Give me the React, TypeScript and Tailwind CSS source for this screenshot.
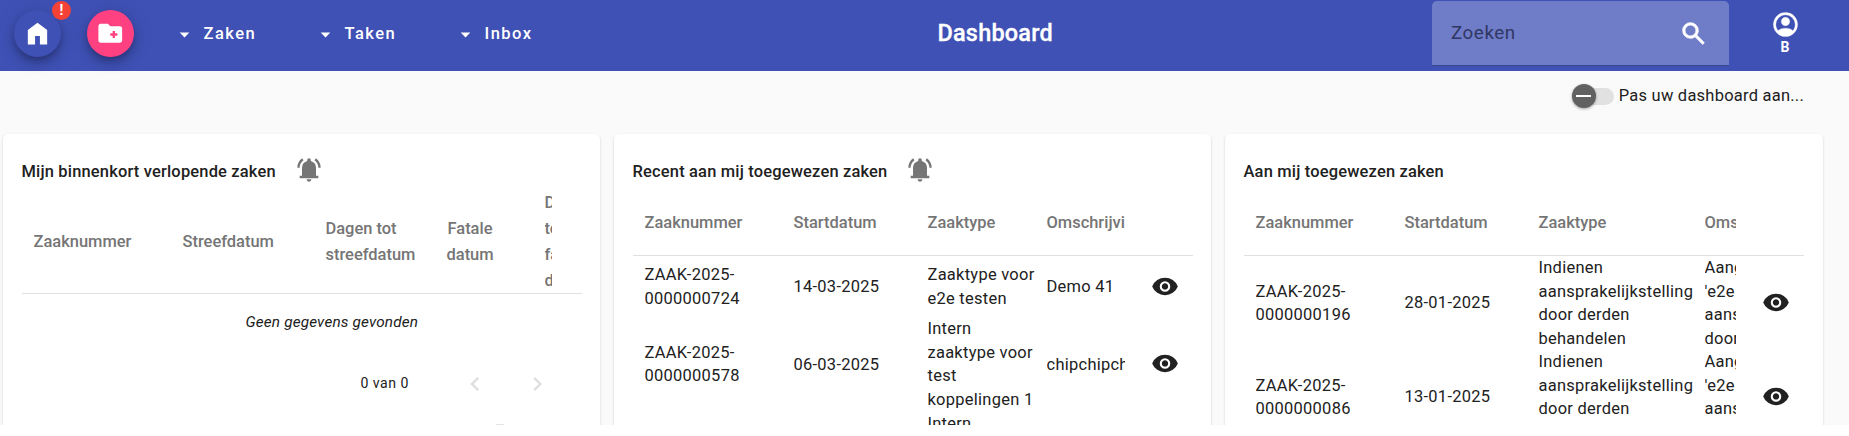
import type { ReactNode } from 'react';

const paths = {
  home: 'M160-120v-480l320-240 320 240v480H560v-280H400v280Z',
  folder:
    'M560-320h80v-80h80v-80h-80v-80h-80v80h-80v80h80v80ZM160-160q-33 0-56.5-23.5T80-240v-480q0-33 23.5-56.5T160-800h240l80 80h320q33 0 56.5 23.5T880-640v400q0 33-23.5 56.5T800-160H160Z',
  caret: 'M480-360 280-560h400L480-360Z',
  search:
    'M784-120 532-372q-30 24-69 38t-83 14q-109 0-184.5-75.5T120-580q0-109 75.5-184.5T380-840q109 0 184.5 75.5T640-580q0 44-14 83t-38 69l252 252-56 56ZM380-400q75 0 127.5-52.5T560-580q0-75-52.5-127.5T380-760q-75 0-127.5 52.5T200-580q0 75 52.5 127.5T380-400Z',
  account:
    'M234-276q51-39 114-61.5T480-360q69 0 132 22.5T726-276q35-41 54.5-93T800-480q0-133-93.5-226.5T480-800q-133 0-226.5 93.5T160-480q0 59 19.5 111t54.5 93Zm246-164q-59 0-99.5-40.5T340-580q0-59 40.5-99.5T480-720q59 0 99.5 40.5T620-580q0 59-40.5 99.5T480-440Zm0 360q-83 0-156-31.5T197-197q-54-54-85.5-127T80-480q0-83 31.5-156T197-763q54-54 127-85.5T480-880q83 0 156 31.5T763-763q54 54 85.5 127T880-480q0 83-31.5 156T763-197q-54 54-127 85.5T480-80Z',
  bell: 'M80-560q0-100 44.5-183.5T244-882l47 64q-60 44-95.5 111T160-560H80Zm720 0q0-80-35.5-147T669-818l47-64q75 55 119.5 138.5T880-560h-80ZM160-200v-80h80v-280q0-83 50-147.5T420-792v-28q0-25 17.5-42.5T480-880q25 0 42.5 17.5T540-820v28q80 20 130 84.5T720-560v280h80v80H160ZM480-80q-33 0-56.5-23.5T400-160h160q0 33-23.5 56.5T480-80Z',
  eye: 'M480-320q75 0 127.5-52.5T660-500q0-75-52.5-127.5T480-680q-75 0-127.5 52.5T300-500q0 75 52.5 127.5T480-320Zm0-72q-45 0-76.5-31.5T372-500q0-45 31.5-76.5T480-608q45 0 76.5 31.5T588-500q0 45-31.5 76.5T480-392Zm0 192q-146 0-266-81.5T40-500q54-137 174-218.5T480-800q146 0 266 81.5T920-500q-54 137-174 218.5T480-200Z',
  prev: 'M560-240 320-480l240-240 56 56-184 184 184 184-56 56Z',
  next: 'M504-480 320-664l56-56 240 240-240 240-56-56 184-184Z',
};

function Icon({ name, className }: { name: keyof typeof paths; className: string }) {
  return (
    <svg viewBox="0 -960 960 960" fill="currentColor" className={`shrink-0 ${className}`}>
      <path d={paths[name]} />
    </svg>
  );
}

function MenuItem({ label, className }: { label: string; className: string }) {
  return (
    <div className={`flex shrink-0 items-center ${className}`}>
      <Icon name="caret" className="mr-[8px] size-[23px]" />
      <span className="text-[16.5px] font-medium tracking-[1.47px]">{label}</span>
    </div>
  );
}

function Card({ title, bell, className, children }: { title: string; bell?: boolean; className: string; children: ReactNode }) {
  return (
    <section
      className={`h-[400px] shrink-0 rounded-[5px] bg-white pl-[18.5px] shadow-[0_2px_1px_-1px_rgba(0,0,0,0.2),0_1px_1px_0_rgba(0,0,0,0.14),0_1px_3px_0_rgba(0,0,0,0.12)] ${className}`}
    >
      <div className="flex h-[56px] items-center pt-[20px]">
        <h2 className="text-[16.47px] font-medium tracking-[0.18px]">{title}</h2>
        {bell && <Icon name="bell" className="mb-[5px] ml-[19px] size-[28px] text-[#757575]" />}
      </div>
      {children}
    </section>
  );
}

type Row = { id: string[]; date: string; type: string[]; text: string[]; height: string };

function CaseTable({ typeWidth, textWidth, header, rows }: { typeWidth: string; textWidth: string; header: string; rows: Row[] }) {
  return (
    <div className="w-[560px] text-[16.47px] whitespace-nowrap">
      <div className="flex h-[66px] border-b border-[#e0e0e0] pl-[12px] pt-[20px] leading-[26px] font-medium text-[#757575]">
        <div className="w-[149px]">Zaaknummer</div>
        <div className="w-[134px]">Startdatum</div>
        <div className={typeWidth}>Zaaktype</div>
        <div className={`overflow-hidden ${textWidth}`}>{header}</div>
      </div>
      {rows.map((row) => (
        <div key={row.id[1]} className={`flex items-center pl-[12px] leading-[23.5px] tracking-[0.27px] ${row.height}`}>
          <div className="w-[149px] shrink-0">
            {row.id.map((l) => (
              <div key={l}>{l}</div>
            ))}
          </div>
          <div className="w-[134px] shrink-0">{row.date}</div>
          <div className={`shrink-0 ${typeWidth}`}>
            {row.type.map((l) => (
              <div key={l}>{l}</div>
            ))}
          </div>
          <div className={`shrink-0 overflow-hidden ${textWidth}`}>
            {row.text.map((l) => (
              <div key={l}>{l}</div>
            ))}
          </div>
          <Icon name="eye" className="ml-[26px] size-[28px]" />
        </div>
      ))}
    </div>
  );
}

const recent: Row[] = [
  { id: ['ZAAK-2025-', '0000000724'], date: '14-03-2025', type: ['Zaaktype voor', 'e2e testen'], text: ['Demo 41'], height: 'h-[61px]' },
  { id: ['ZAAK-2025-', '0000000578'], date: '06-03-2025', type: ['Intern', 'zaaktype voor', 'test', 'koppelingen 1'], text: ['chipchipchip'], height: 'h-[94.5px]' },
];

const claim = ['Indienen', 'aansprakelijkstelling', 'door derden', 'behandelen'];
const claimText = ['Aangemaakt', "'e2e test", 'aansprakelijk', 'door derden'];
const assigned: Row[] = [
  { id: ['ZAAK-2025-', '0000000196'], date: '28-01-2025', type: claim, text: claimText, height: 'h-[94px]' },
  { id: ['ZAAK-2025-', '0000000086'], date: '13-01-2025', type: claim, text: claimText, height: 'h-[94px]' },
];

export default function App() {
  return (
    <div className="h-[436px] w-[1849px] overflow-hidden bg-white font-[Roboto,sans-serif] text-[#212121]">
      <div className="h-[425px] overflow-hidden bg-[#fafafa]">
        <header className="flex h-[71px] items-start bg-[#3f51b5] text-white">
          <div className="relative mt-[10px] ml-[14px] flex size-[47px] shrink-0 items-center justify-center rounded-full bg-[#3f51b5] shadow-[0_4px_6px_-1px_rgba(0,0,0,0.2),0_7px_12px_0_rgba(0,0,0,0.14),0_1px_21px_0_rgba(0,0,0,0.12)]">
            <Icon name="home" className="size-[29px]" />
            <span className="absolute -top-[9px] left-[38px] flex size-[19px] items-center justify-center rounded-full bg-[#f44336] text-[14px] font-bold">
              !
            </span>
          </div>
          <div className="mt-[10px] ml-[26px] flex size-[47px] shrink-0 items-center justify-center rounded-full bg-[#ff4081] shadow-[0_4px_6px_-1px_rgba(0,0,0,0.2),0_7px_12px_0_rgba(0,0,0,0.14),0_1px_21px_0_rgba(0,0,0,0.12)]">
            <Icon name="folder" className="size-[28.5px]" />
          </div>
          <nav className="ml-[38.5px] flex h-[68px] w-[765px] shrink-0">
            <MenuItem label="Zaken" className="w-[141px]" />
            <MenuItem label="Taken" className="w-[140px]" />
            <MenuItem label="Inbox" className="w-[140px]" />
          </nav>
          <h1 className="flex h-[68px] w-[494.5px] shrink-0 items-center text-[23.5px] font-medium tracking-[0.18px] [-webkit-text-stroke:0.3px]">
            Dashboard
          </h1>
          <div className="mt-px flex h-[65px] w-[297px] shrink-0 items-center rounded-t-[5px] border-b border-[#384590] bg-[#6f7cc7] pt-px pl-[19px]">
            <span className="w-[228px] text-[18.8px] tracking-[0.55px] text-[#2f3764]">Zoeken</span>
            <Icon name="search" className="size-[29px] stroke-white [stroke-width:24]" />
          </div>
          <div className="ml-[42px] flex w-[28px] flex-col items-center pt-[9.5px]">
            <Icon name="account" className="size-[29px] stroke-white [stroke-width:10]" />
            <span className="text-[14px] leading-[16px] font-bold">B</span>
          </div>
        </header>

        <div className="flex h-[63px] justify-end pt-[12px] pr-[45px]">
          <div className="flex h-[26px] items-center">
            <div className="mr-[5px] flex h-[17px] w-[42px] items-center rounded-full bg-[#e1e1e1]">
              <div className="flex size-[24px] items-center justify-center rounded-full bg-[#616161] shadow-[0_1px_3px_rgba(0,0,0,0.35)]">
                <div className="h-[2px] w-[15px] bg-white" />
              </div>
            </div>
            <span className="text-[16.47px] tracking-[0.25px]">Pas uw dashboard aan...</span>
          </div>
        </div>

        <main className="flex pl-[3px]">
          <Card title="Mijn binnenkort verlopende zaken" bell className="w-[597px]">
            <div className="w-[560px] text-[16.47px] whitespace-nowrap">
              <div className="flex h-[104px] items-center border-b border-[#e0e0e0] pl-[12px] leading-[26px] font-medium text-[#757575]">
                <div className="w-[149px]">Zaaknummer</div>
                <div className="w-[143px]">Streefdatum</div>
                <div className="w-[121px]">
                  Dagen tot
                  <br />
                  streefdatum
                </div>
                <div className="w-[47px] text-center">
                  Fatale
                  <br />
                  datum
                </div>
                <div className="ml-[51px] w-[7px] overflow-hidden">
                  Dagen
                  <br />
                  tot
                  <br />
                  fatale
                  <br />
                  datum
                </div>
              </div>
              <p className="h-[56px] pt-[16px] pl-[224px] text-[15.3px] leading-[24px] tracking-[0.17px] italic">
                Geen gegevens gevonden
              </p>
              <div className="flex h-[67px] items-center">
                <span className="ml-[339px] w-[100px] text-[14.1px] tracking-[0.47px]">0 van 0</span>
                <Icon name="prev" className="size-[28px] text-[#dedede]" />
                <Icon name="next" className="ml-[35px] size-[28px] text-[#dedede]" />
              </div>
              <div className="mt-[7px] ml-[474px] h-px w-[8px] bg-[#e4e4e4]" />
            </div>
          </Card>
          <Card title="Recent aan mij toegewezen zaken" bell className="ml-[14px] w-[597px]">
            <CaseTable typeWidth="w-[119px]" textWidth="w-[78px]" header="Omschrijving" rows={recent} />
            <div className="pl-[295px] text-[16.47px] leading-[23.5px] tracking-[0.27px]">Intern</div>
          </Card>
          <Card title="Aan mij toegewezen zaken" className="ml-[14px] w-[598px]">
            <CaseTable typeWidth="w-[166px]" textWidth="w-[31px]" header="Omschrijving" rows={assigned} />
          </Card>
        </main>
      </div>
    </div>
  );
}
